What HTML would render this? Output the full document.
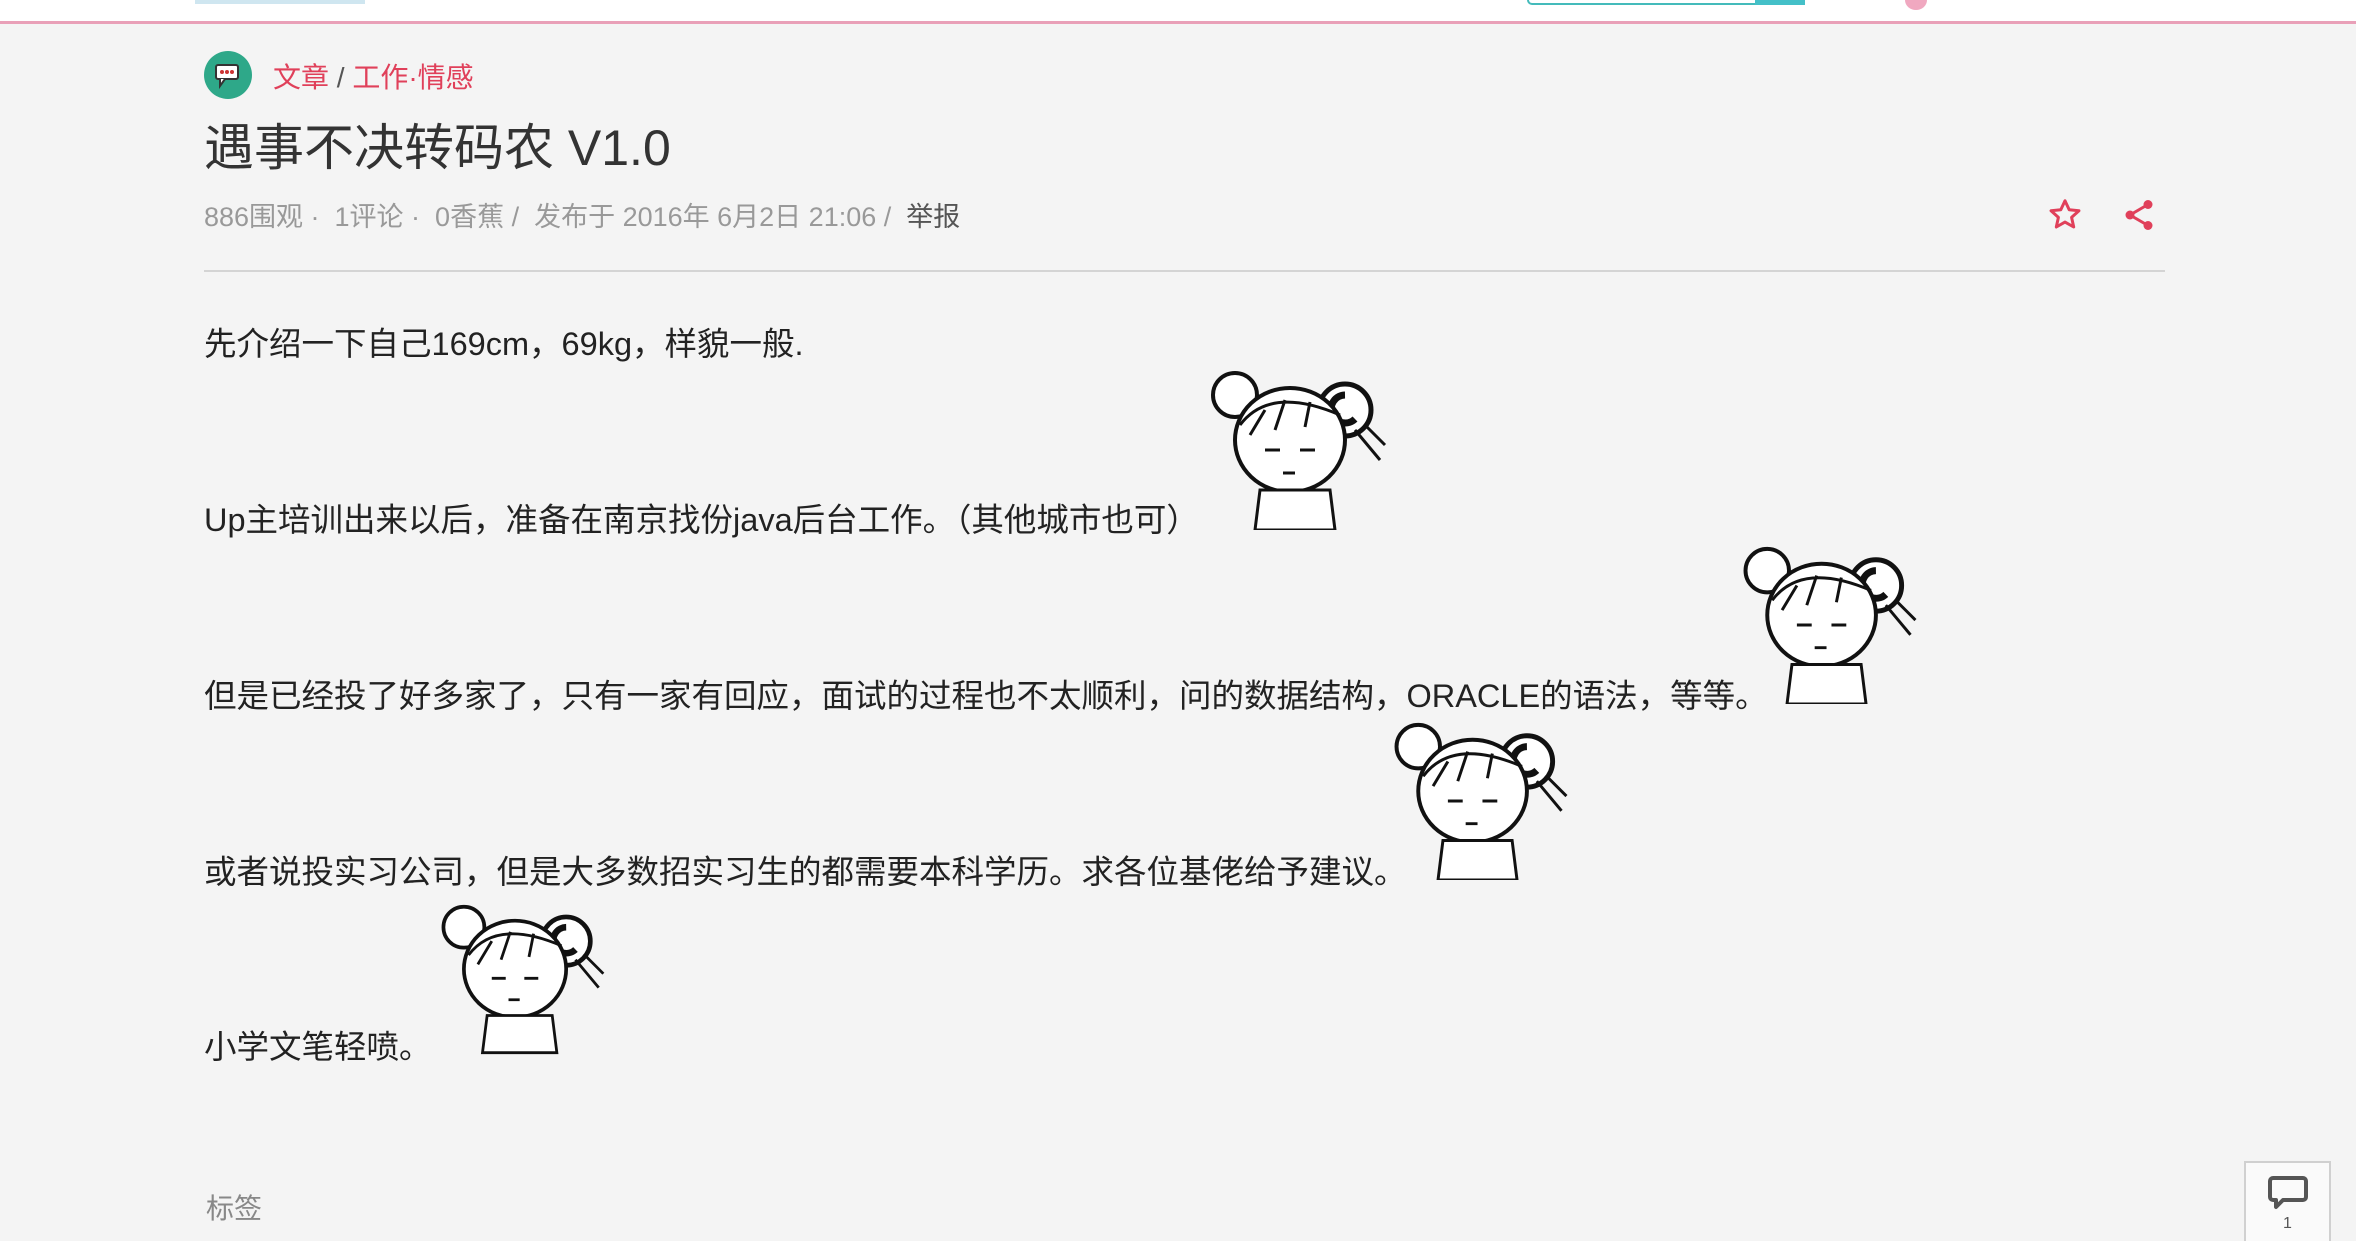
<!DOCTYPE html>
<html><head><meta charset="utf-8"><style>
*{margin:0;padding:0;box-sizing:border-box}
body{width:2356px;height:1234px;overflow:hidden;background:#f4f4f4;font-family:"Liberation Sans","Noto Sans CJK SC",sans-serif;position:relative;color:#222}
.hdr{position:absolute;left:0;top:0;width:2356px;height:24px;background:#fff;border-bottom:3px solid #e9a0b8}
.a{position:absolute;white-space:nowrap}
.p{position:absolute;left:204px;font-size:32.5px;color:#222;white-space:nowrap}
.img{position:absolute}
</style></head><body>
<div class="hdr">
 <div class="a" style="left:1527px;top:0;width:278px;height:5px;border:2px solid #4bb;border-top:none;border-radius:0 0 6px 6px;background:#fff"></div>
 <div class="a" style="left:1755px;top:0;width:50px;height:5px;background:#44c0c8"></div>
 <div class="a" style="left:1905px;top:-10px;width:22px;height:20px;border-radius:50%;background:#f0a8c0"></div>
 <div class="a" style="left:195px;top:0;width:170px;height:4px;background:#cfe6f0"></div>
</div>
<svg class="a" style="left:204px;top:51px" width="48" height="48" viewBox="0 0 48 48"><circle cx="24" cy="24" r="24" fill="#2ea889"/><rect x="12" y="14" width="22" height="14" rx="2" fill="#fff" stroke="#333" stroke-width="2"/><circle cx="18" cy="21" r="2" fill="#c33"/><circle cx="23" cy="21" r="2" fill="#c33"/><circle cx="28" cy="21" r="2" fill="#c33"/><path d="M16 28v7l5-7" fill="#fff" stroke="#333" stroke-width="2"/></svg>
<div class="a" style="left:273px;top:56px;font-size:28px;color:#e0405a">文章 <span style="color:#555">/</span> 工作·情感</div>
<div class="a" style="left:204px;top:108px;font-size:50px;color:#333">遇事不决转码农 V1.0</div>
<div class="a" style="left:204px;top:195px;font-size:27px;color:#999">886围观 · &nbsp;1评论 · &nbsp;0香蕉 / &nbsp;发布于 2016年 6月2日 21:06 / &nbsp;<span style="color:#555">举报</span></div>
<svg class="a" style="left:2047px;top:197px" width="36" height="36" viewBox="0 0 24 24"><path d="M12 2.5l2.8 6 6.5.7-4.9 4.4 1.4 6.4L12 16.7 6.2 20l1.4-6.4L2.7 9.2l6.5-.7z" fill="none" stroke="#e0405a" stroke-width="2" stroke-linejoin="round"/></svg>
<svg class="a" style="left:2121px;top:197px" width="36" height="36" viewBox="0 0 24 24"><circle cx="18" cy="5" r="3" fill="#e0405a"/><circle cx="6" cy="12" r="3" fill="#e0405a"/><circle cx="18" cy="19" r="3" fill="#e0405a"/><path d="M18 5L6 12l12 7" stroke="#e0405a" stroke-width="2" fill="none"/></svg>
<div class="a" style="left:204px;top:270px;width:1961px;height:2px;background:#d4d4d4"></div>
<div class="p" style="top:318px">先介绍一下自己169cm，69kg，样貌一般.</div>
<div class="p" style="top:494px">Up主培训出来以后，准备在南京找份java后台工作。（其他城市也可）</div>
<div class="p" style="top:670px">但是已经投了好多家了，只有一家有回应，面试的过程也不太顺利，问的数据结构，ORACLE的语法，等等。</div>
<div class="p" style="top:846px">或者说投实习公司，但是大多数招实习生的都需要本科学历。求各位基佬给予建议。</div>
<div class="p" style="top:1021px">小学文笔轻喷。</div>
<svg width="0" height="0" style="position:absolute"><defs><g id="g"><circle cx="30" cy="30" r="22" fill="#fff" stroke="#111" stroke-width="4"/><circle cx="140" cy="45" r="26" fill="#fff" stroke="#111" stroke-width="5"/><path d="M140 30a14 14 0 1 0 10 24" fill="none" stroke="#111" stroke-width="7"/><ellipse cx="85" cy="75" rx="55" ry="52" fill="#fff" stroke="#111" stroke-width="4"/><path d="M35 60q30-40 100-10M45 70l15-25M70 65l10-30M100 62l5-25" stroke="#111" stroke-width="3" fill="none"/><path d="M60 85h15M95 85h15M78 108h12" stroke="#111" stroke-width="3"/><path d="M55 125l-5 40h80l-5-40z" fill="#fff" stroke="#111" stroke-width="3"/><path d="M150 65l25 30M160 60l20 20" stroke="#111" stroke-width="3"/></g></defs></svg>
<svg class="img" style="left:1205px;top:365px" width="185" height="165" viewBox="0 0 185 165"><use href="#g"/></svg>
<svg class="img" style="left:1735px;top:541px" width="188" height="163" viewBox="0 0 185 165"><use href="#g"/></svg>
<svg class="img" style="left:1387px;top:717px" width="186" height="163" viewBox="0 0 185 165"><use href="#g"/></svg>
<svg class="img" style="left:436px;top:896px" width="172" height="160" viewBox="0 0 185 165"><use href="#g"/></svg>
<div class="a" style="left:206px;top:1187px;font-size:28px;color:#888">标签</div>
<div class="a" style="left:2244px;top:1161px;width:87px;height:80px;background:#fafafa;border:2px solid #d0d0d0;border-bottom:none">
 <svg style="position:absolute;left:21px;top:12px" width="42" height="38" viewBox="0 0 42 38"><path d="M6 3h30a3 3 0 0 1 3 3v16a3 3 0 0 1-3 3H16l-7 7v-7H6a3 3 0 0 1-3-3V6a3 3 0 0 1 3-3z" fill="none" stroke="#555" stroke-width="4" stroke-linejoin="round"/></svg>
 <div style="position:absolute;left:0;width:83px;top:52px;text-align:center;font-size:16px;color:#555">1</div>
</div>
</body></html>
